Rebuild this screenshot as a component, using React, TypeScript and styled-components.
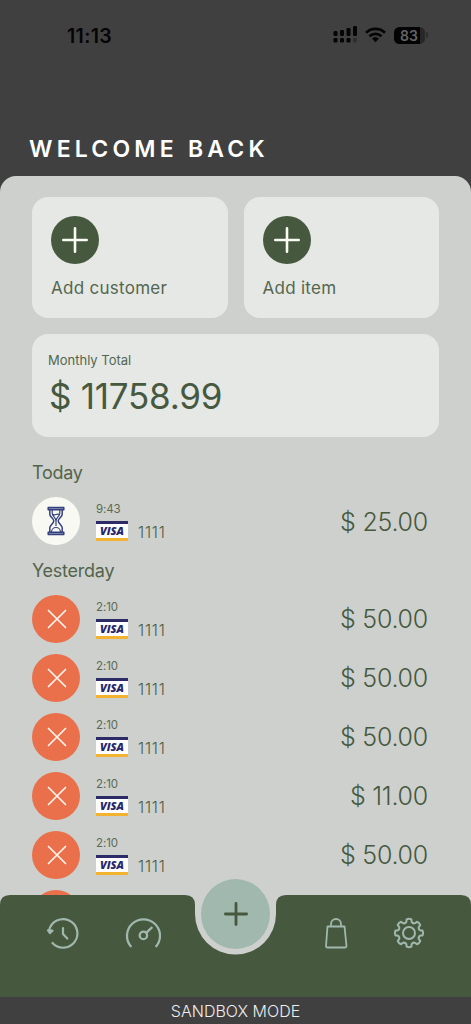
import React from "react";
import styled, { createGlobalStyle } from "styled-components";

const GlobalStyle = createGlobalStyle`
  * { box-sizing: border-box; }
  body { margin: 0; background: #404040; font-family: Inter, "Liberation Sans", sans-serif; }
`;

const green = "#46593f";
const sage = "#a0b8ad";

const Screen = styled.div`
  width: 471px;
  height: 1024px;
  display: flex;
  flex-direction: column;
  background: #404040;
  color: ${green};
  overflow: hidden;
`;

const Header = styled.header`
  height: 176px;
  flex: none;
`;

const StatusBar = styled.div`
  height: 70px;
  display: flex;
  justify-content: space-between;
  padding: 0 43px 0 67px;
  align-items: center;
  color: #050505;
`;

const Clock = styled.span`
  padding-top: 1px;
  font-size: 19.5px;
  font-weight: 600;
  line-height: 24px;
  letter-spacing: 0.35px;
`;

const Indicators = styled.div`
  display: flex;
  align-items: center;
  height: 18px;
`;

const Battery = styled.div`
  width: 31px;
  height: 17px;
  margin-left: 8px;
  padding-left: 6px;
  border-radius: 5.5px;
  background: linear-gradient(to right, #030303 26px, #272727 26px);
  color: #646464;
  font-size: 14px;
  font-weight: 600;
  line-height: 17px;
`;

const BatteryCap = styled.div`
  width: 2px;
  height: 6px;
  margin-left: 1px;
  border-radius: 0 2px 2px 0;
  background: #2c2c2c;
`;

const Title = styled.h1`
  margin: 62px 0 0 29px;
  font-size: 23px;
  line-height: 35px;
  font-weight: 600;
  letter-spacing: 4.2px;
  color: #fff;
  white-space: nowrap;
`;

const Panel = styled.main`
  flex: 1;
  min-height: 0;
  overflow: hidden;
  padding: 21px 32px 0;
  border-radius: 16px 16px 0 0;
  background: #ced0cd;
`;

const Actions = styled.div`
  display: grid;
  grid-template-columns: 1fr 1fr;
  gap: 16px;
`;

const Card = styled.section`
  border-radius: 16px;
  background: #e5e8e5;
`;

const ActionCard = styled(Card)`
  height: 121px;
  padding: 19px;
`;

const Disc = styled.div<{ $fill: string }>`
  width: 48px;
  height: 48px;
  flex: none;
  border-radius: 50%;
  display: grid;
  place-items: center;
  background: ${(p) => p.$fill};
`;

const ActionLabel = styled.div`
  margin-top: 12px;
  font-size: 17px;
  line-height: 24px;
  letter-spacing: 0.28px;
  opacity: 0.9;
`;

const TotalCard = styled(Card)`
  height: 103px;
  margin-top: 16px;
  padding: 16px;
`;

const TotalLabel = styled.div`
  font-size: 13px;
  line-height: 20px;
  opacity: 0.9;
`;

const TotalValue = styled.div`
  margin: 5px 0 0 1px;
  font-size: 35px;
  line-height: 42px;
  font-weight: 400;
  letter-spacing: -0.25px;
`;

const Day = styled.h2<{ $first?: boolean }>`
  margin: ${(p) => (p.$first ? "24px" : "13.5px")} 0 12px;
  font-size: 18px;
  line-height: 24px;
  font-weight: 400;
  letter-spacing: -0.25px;
  opacity: 0.9;
`;

const Row = styled.div`
  height: 48px;
  display: flex;
  align-items: center;
  & + & { margin-top: 11px; }
`;

const Details = styled.div`
  margin: 0 auto 0 16px;
  padding-top: 4px;
  align-self: stretch;
`;

const Time = styled.div`
  font-size: 11.5px;
  line-height: 16px;
  letter-spacing: -0.1px;
  opacity: 0.85;
`;

const CardLine = styled.div`
  display: flex;
  align-items: flex-start;
  margin-top: 4px;
  gap: 10px;
`;

const Visa = styled.span`
  width: 32px;
  height: 20px;
  border-top: 3px solid #2c2a67;
  border-bottom: 3px solid #f3b32e;
  background: #fdfdfd;
  color: #29276b;
  font: italic 800 11px/14px "Open Sans", sans-serif;
  text-align: center;
`;

const Digits = styled.span`
  padding-top: 3px;
  font-size: 15.5px;
  line-height: 18px;
  font-weight: 300;
  letter-spacing: 0.8px;
`;

const Amount = styled.div`
  margin-right: 11px;
  padding-top: 1px;
  font-size: 25px;
  line-height: 32px;
  font-weight: 300;
  letter-spacing: -0.25px;
`;

const BottomNav = styled.nav`
  position: relative;
  flex: none;
  height: 102px;
  margin-top: -102px;
`;

const NavShape = styled.svg`
  position: absolute;
  inset: 0;
`;

const NavItems = styled.div`
  position: relative;
  display: flex;
  justify-content: space-between;
  padding: 20px 44px 0;
`;

const NavGroup = styled.div<{ $gap: number }>`
  display: flex;
  gap: ${(p) => p.$gap}px;
`;

const AddButton = styled.button`
  position: absolute;
  top: -16px;
  left: 201px;
  width: 69px;
  height: 70px;
  padding: 0;
  border: 0;
  border-radius: 50%;
  display: grid;
  place-items: center;
  background: #a0b8ad;
`;

const ModeBar = styled.footer`
  flex: none;
  height: 27px;
  background: #404040;
  color: #eee;
  text-align: center;
  font-size: 16px;
  line-height: 28px;
  font-weight: 300;
`;

const Plus = ({ size, color, width }: { size: number; color: string; width: number }) => (
  <svg width={size} height={size} viewBox={`0 0 ${size} ${size}`} stroke={color} strokeWidth={width} strokeLinecap="round">
    <path d={`M${size / 2} ${width / 2}V${size - width / 2}M${width / 2} ${size / 2}H${size - width / 2}`} />
  </svg>
);

const Signal = () => (
  <svg width="24" height="18" viewBox="0 0 24 18" fill="#050505">
    <rect x="0.5" y="5" width="4" height="5" rx="1.2" />
    <rect x="7" y="4" width="4" height="6" rx="1.2" />
    <rect x="13.5" y="2" width="4" height="8" rx="1.2" />
    <rect x="20" y="0" width="4" height="10" rx="1.2" />
    <rect x="0.5" y="12" width="4" height="4.5" rx="1.2" />
    <rect x="7" y="12" width="4" height="4.5" rx="1.2" />
    <rect x="13.5" y="12" width="4" height="4.5" rx="1.2" />
    <rect x="20" y="12" width="4" height="4.5" rx="1.2" fill="#303030" />
  </svg>
);

const WifiIcon = styled.svg`
  margin-left: 8px;
`;

const Wifi = () => (
  <WifiIcon width="21" height="16" viewBox="0 0 21 16">
    <g fill="none" stroke="#050505" strokeWidth="2.7">
      <path d="M1 5.7a13.6 13.6 0 0 1 19 0" />
      <path d="M4.5 9.3a8.6 8.6 0 0 1 12 0" />
    </g>
    <path d="M7 11.6a5.2 5.2 0 0 1 7 0L10.5 15.3z" fill="#050505" />
  </WifiIcon>
);

const Hourglass = () => (
  <svg width="18" height="30" viewBox="0 0 18 30" fill="none" stroke="#35407e" strokeWidth="1.5" strokeLinejoin="round">
    <rect x="1.2" y="1.4" width="15.6" height="2.4" fill="#8c93b8" />
    <rect x="1.2" y="26.2" width="15.6" height="2.4" fill="#8c93b8" />
    <path d="M2.8 4v4.2c0 2.8 4 4.3 4 6.8s-4 4-4 6.8V26M15.2 4v4.2c0 2.8-4 4.3-4 6.8s4 4 4 6.8V26" />
    <path d="M5.2 4v3.5c0 2.500 3.800 4 3.800 7.500 0-3.500 3.800-5 3.800-7.500V4M5.500 8.300q1.800 1 3.500.2t3.500-.2M9 15v5M4.500 26c0-2.500 2-4.500 4.500-4.500s4.500 2 4.500 4.500" strokeWidth="1.2" />
  </svg>
);

const CrossIcon = styled.svg`
  margin-left: 2px;
`;

const Cross = () => (
  <CrossIcon width="20" height="20" viewBox="0 0 20 20" stroke="#fff5ee" strokeWidth="1.7" strokeLinecap="round">
    <path d="M1.5 1.5 18.5 18.5M18.5 1.5 1.5 18.5" />
  </CrossIcon>
);

const NavIcon = styled.svg.attrs({ width: 36, height: 36, viewBox: "0 0 36 36" })<{ $weight?: number }>`
  fill: none;
  stroke: ${sage};
  stroke-width: ${(p) => p.$weight ?? 2.2};
  stroke-linecap: round;
  stroke-linejoin: round;
`;

const teeth = Array.from({ length: 8 }, (_, i) => {
  const at = (r: number, deg: number) => {
    const a = ((i * 45 + deg - 90) * Math.PI) / 180;
    return `${(18 + r * Math.cos(a)).toFixed(2)} ${(18 + r * Math.sin(a)).toFixed(2)}`;
  };
  return `${i ? "L" : "M"}${at(11.6, -13)}L${at(13.8, -10)}Q${at(14.7, 0)} ${at(13.8, 10)}L${at(11.6, 13)}Q${at(9.8, 22.5)} ${at(11.6, 32)}`;
}).join("");

const payments = [
  { day: "Today", items: [{ time: "9:43", amount: "25.00", pending: true }] },
  {
    day: "Yesterday",
    items: ["50.00", "50.00", "50.00", "11.00", "50.00", "50.00"].map((amount) => ({ time: "2:10", amount, pending: false })),
  },
];

export default function App() {
  return (
    <>
      <GlobalStyle />
      <Screen>
        <Header>
          <StatusBar>
            <Clock>11:13</Clock>
            <Indicators>
              <Signal />
              <Wifi />
              <Battery>83</Battery>
              <BatteryCap />
            </Indicators>
          </StatusBar>
          <Title>WELCOME BACK</Title>
        </Header>
        <Panel>
          <Actions>
            {["Add customer", "Add item"].map((label) => (
              <ActionCard key={label}>
                <Disc $fill={green}><Plus size={26} color="#fbfcf4" width={2.6} /></Disc>
                <ActionLabel>{label}</ActionLabel>
              </ActionCard>
            ))}
          </Actions>
          <TotalCard>
            <TotalLabel>Monthly Total</TotalLabel>
            <TotalValue>$ 11758.99</TotalValue>
          </TotalCard>
          {payments.map(({ day, items }, index) => (
            <section key={day}>
              <Day $first={index === 0}>{day}</Day>
              {items.map((item, i) => (
                <Row key={i}>
                  <Disc $fill={item.pending ? "#f8f9f3" : "#e9704a"}>{item.pending ? <Hourglass /> : <Cross />}</Disc>
                  <Details>
                    <Time>{item.time}</Time>
                    <CardLine><Visa>VISA</Visa><Digits>1111</Digits></CardLine>
                  </Details>
                  <Amount>$ {item.amount}</Amount>
                </Row>
              ))}
            </section>
          ))}
        </Panel>
        <BottomNav>
          <NavShape width="471" height="102" viewBox="0 0 471 102">
            <path d="M195 0H276V19A40.5 40.5 0 0 1 195 19Z" fill="#ced0cd" />
            <path d="M0 10Q0 0 10 0H185Q195 0 195 10V19A40.5 40.5 0 0 0 276 19V10Q276 0 286 0H461Q471 0 471 10V102H0Z" fill={green} />
          </NavShape>
          <NavItems>
            <NavGroup $gap={45}>
              <NavIcon>
                <path d="M5.2 15.2A14.3 14.3 0 1 1 8.5 28M19 13v6l4.3 4.5" />
                <path d="M4 15.3l2 2.7 2.5-2.3z" />
              </NavIcon>
              <NavIcon $weight={2.3}>
                <path d="M5.7 31.2A16.5 16.5 0 1 1 31.3 31.2M21.2 17.8l5.5-5.1" />
                <circle cx="18.4" cy="20.4" r="3.7" />
              </NavIcon>
            </NavGroup>
            <NavGroup $gap={37}>
              <NavIcon $weight={1.8}>
                <path d="M9.5 11.5H26.5L28.5 31Q28.5 32.5 27 32.5H9.500Q8 32.500 8 31ZM13 11.500V9a5 5 0 0 1 10 0V11.500" />
              </NavIcon>
              <NavIcon $weight={2}>
                <path d={`${teeth}Z`} />
                <circle cx="18" cy="18" r="6" />
              </NavIcon>
            </NavGroup>
          </NavItems>
          <AddButton aria-label="Add"><Plus size={24} color={green} width={2.8} /></AddButton>
        </BottomNav>
        <ModeBar>SANDBOX MODE</ModeBar>
      </Screen>
    </>
  );
}
